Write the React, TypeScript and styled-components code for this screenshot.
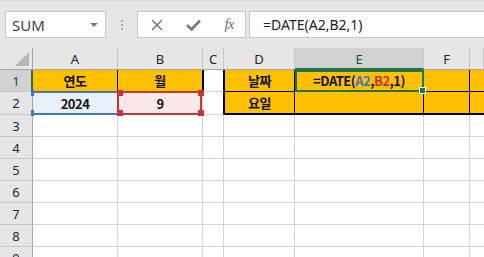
import React from "react";
import styled, { createGlobalStyle } from "styled-components";

const GlobalStyle = createGlobalStyle`
  html, body {
    margin: 0;
    padding: 0;
    background: #ffffff;
  }
  body {
    font-family: "Noto Sans", "Noto Sans CJK KR", sans-serif;
  }
`;

const YELLOW = "#ffc000";
const GRID = "1px solid #d4d4d4";
const BLACK = "1px solid #000000";
const THICK = "2px solid #000000";
const GREEN = "#217346";
const BLUE = "#4472c4";
const RED = "#c3343c";

const Window = styled.div`
  width: 484px;
  height: 257px;
  overflow: hidden;
  background: #ffffff;
`;

const FormulaBar = styled.div`
  display: flex;
  align-items: flex-start;
  height: 48px;
  box-sizing: border-box;
  padding: 10px 0 0 5px;
  background: #e6e6e6;
  border-top: 1px solid #d8d8d8;
`;

const NameBox = styled.div`
  width: 101px;
  height: 27px;
  box-sizing: border-box;
  display: flex;
  align-items: center;
  justify-content: space-between;
  padding: 0 6px 0 6px;
  background: #ffffff;
  border: 1px solid #c6c6c6;
  font-size: 15px;
  color: #444444;
`;

const DropArrow = styled.span`
  width: 0;
  height: 0;
  border-left: 4px solid transparent;
  border-right: 4px solid transparent;
  border-top: 4px solid #7a7a7a;
  margin-right: 1px;
`;

const Splitter = styled.div`
  width: 31px;
  height: 27px;
  display: flex;
  flex-direction: column;
  align-items: center;
  justify-content: center;
  gap: 2px;
  span {
    width: 2px;
    height: 2px;
    background: #a8a8a8;
  }
`;

const FxBox = styled.div`
  width: 109px;
  height: 27px;
  box-sizing: border-box;
  display: grid;
  grid-template-columns: repeat(3, 36px);
  padding-left: 1px;
  background: #ffffff;
  border: 1px solid #c6c6c6;
  color: #7a7a7a;
`;

const FxButton = styled.div`
  display: flex;
  align-items: center;
  justify-content: center;
`;

const FxGlyph = styled.span`
  font-family: "Liberation Serif", "DejaVu Serif", serif;
  font-style: italic;
  font-size: 15px;
  color: #6e6e6e;
  letter-spacing: -1px;
`;

const FormulaInput = styled.div`
  flex: 1;
  margin-left: 3px;
  height: 27px;
  box-sizing: border-box;
  padding-left: 13px;
  background: #ffffff;
  border: 1px solid #c6c6c6;
  border-right: none;
  font-size: 14px;
  line-height: 25px;
  color: #222222;
`;

const Sheet = styled.div`
  display: grid;
  grid-template-columns: 33px 85px 85px 21px 71px 129px 46px 1fr;
  grid-template-rows: 22px 22px 23px repeat(7, 22px);
`;

const Corner = styled.div`
  position: relative;
  background: #e6e6e6;
  border-right: 1px solid #a6a6a6;
  border-bottom: 1px solid #a6a6a6;
  &::after {
    content: "";
    position: absolute;
    right: 3px;
    bottom: 3px;
    width: 0;
    height: 0;
    border-left: 14px solid transparent;
    border-bottom: 14px solid #b6b6b6;
  }
`;

const ColHeader = styled.div<{ $active?: boolean }>`
  display: flex;
  align-items: center;
  justify-content: center;
  box-sizing: border-box;
  background: ${(p) => (p.$active ? "#d2d2d2" : "#e6e6e6")};
  border-right: 1px solid #c6c6c6;
  border-bottom: ${(p) => (p.$active ? `2px solid ${GREEN}` : "1px solid #a6a6a6")};
  font-size: 13px;
  color: ${(p) => (p.$active ? "#1d4d2d" : "#262626")};
  padding-top: ${(p) => (p.$active ? "1px" : "0")};
`;

const RowHeader = styled.div<{ $active?: boolean }>`
  display: flex;
  align-items: center;
  justify-content: center;
  box-sizing: border-box;
  background: ${(p) => (p.$active ? "#d2d2d2" : "#e6e6e6")};
  border-right: ${(p) => (p.$active ? `2px solid ${GREEN}` : "1px solid #a6a6a6")};
  border-bottom: 1px solid #c6c6c6;
  font-size: 13px;
  color: ${(p) => (p.$active ? "#1d4d2d" : "#262626")};
  padding-left: ${(p) => (p.$active ? "1px" : "0")};
`;

const Cell = styled.div<{
  $bg?: string;
  $right?: string;
  $bottom?: string;
  $left?: string;
}>`
  position: relative;
  display: flex;
  align-items: center;
  justify-content: center;
  box-sizing: border-box;
  background: ${(p) => p.$bg || "#ffffff"};
  border-right: ${(p) => p.$right || GRID};
  border-bottom: ${(p) => p.$bottom || GRID};
  border-left: ${(p) => p.$left || "none"};
  font-family: "Noto Sans CJK KR", "Noto Sans", sans-serif;
  font-weight: 700;
  font-size: 13px;
  letter-spacing: -0.5px;
  color: #111111;
`;

const ActiveBorder = styled.div`
  position: absolute;
  top: 0;
  left: 0;
  right: -1px;
  bottom: -1px;
  border: 2px solid ${GREEN};
  z-index: 3;
  pointer-events: none;
`;

const FillHandle = styled.div`
  position: absolute;
  right: -4px;
  bottom: -4px;
  width: 5px;
  height: 5px;
  background: ${GREEN};
  border: 1px solid #ffffff;
`;

const RefBox = styled.div<{ $color: string; $sides: "all" | "tb" }>`
  position: absolute;
  top: -1px;
  bottom: -1px;
  left: ${(p) => (p.$sides === "all" ? "-1px" : "0")};
  right: 0;
  border-top: 2px solid ${(p) => p.$color};
  border-bottom: 2px solid ${(p) => p.$color};
  border-left: ${(p) => (p.$sides === "all" ? `2px solid ${p.$color}` : "none")};
  border-right: ${(p) => (p.$sides === "all" ? `2px solid ${p.$color}` : "none")};
  z-index: ${(p) => (p.$sides === "all" ? 4 : 3)};
  pointer-events: none;
`;

const Handle = styled.span<{
  $color: string;
  $x: "left" | "right";
  $y: "top" | "bottom";
  $w?: number;
}>`
  position: absolute;
  width: ${(p) => p.$w ?? 6}px;
  height: 6px;
  background: ${(p) => p.$color};
  ${(p) => (p.$x === "left" ? "left: -2px;" : "right: -4px;")}
  ${(p) => (p.$y === "top" ? "top: -3px;" : "bottom: -3px;")}
`;

const Ref = styled.span<{ $color: string }>`
  color: ${(p) => p.$color};
`;

const CrossIcon = () => (
  <svg width="12" height="12" viewBox="0 0 12 12">
    <path d="M1 1 L11 11 M11 1 L1 11" stroke="#7a7a7a" strokeWidth="1.6" fill="none" />
  </svg>
);

const CheckIcon = () => (
  <svg width="15" height="12" viewBox="0 0 15 12">
    <path d="M1 6 L5.5 10.5 L14 1.5" stroke="#7a7a7a" strokeWidth="2.6" fill="none" />
  </svg>
);

const columns = ["A", "B", "C", "D", "E", "F", ""];

export default function App() {
  return (
    <Window>
      <GlobalStyle />
      <FormulaBar>
        <NameBox>
          SUM
          <DropArrow />
        </NameBox>
        <Splitter>
          <span />
          <span />
          <span />
        </Splitter>
        <FxBox>
          <FxButton>
            <CrossIcon />
          </FxButton>
          <FxButton>
            <CheckIcon />
          </FxButton>
          <FxButton>
            <FxGlyph>fx</FxGlyph>
          </FxButton>
        </FxBox>
        <FormulaInput>=DATE(A2,B2,1)</FormulaInput>
      </FormulaBar>

      <Sheet>
        <Corner />
        {columns.map((c, i) => (
          <ColHeader key={i} $active={c === "E"}>
            {c}
          </ColHeader>
        ))}

        <RowHeader $active>1</RowHeader>
        <Cell $bg={YELLOW} $right={BLACK}>연도</Cell>
        <Cell $bg={YELLOW} $right={BLACK}>월</Cell>
        <Cell $left={BLACK} $right={BLACK} />
        <Cell $bg={YELLOW} $left={BLACK} $right={BLACK} $bottom={BLACK}>날짜</Cell>
        <Cell $bg={YELLOW} $right={BLACK} $bottom={BLACK}>
          =DATE(<Ref $color={BLUE}>A2</Ref>,<Ref $color={RED}>B2</Ref>,1)
          <ActiveBorder>
            <FillHandle />
          </ActiveBorder>
        </Cell>
        <Cell $bg={YELLOW} $right={BLACK} $bottom={BLACK} />
        <Cell $bg={YELLOW} $right="none" $bottom={BLACK} />

        <RowHeader>2</RowHeader>
        <Cell $bg="#e9f0fa">
          2024
          <RefBox $color={BLUE} $sides="tb">
            <Handle $color={BLUE} $x="left" $y="top" $w={3} />
            <Handle $color={BLUE} $x="left" $y="bottom" $w={3} />
          </RefBox>
        </Cell>
        <Cell $bg="#fbe9ea">
          9
          <RefBox $color={RED} $sides="all">
            <Handle $color={RED} $x="left" $y="top" />
            <Handle $color={RED} $x="right" $y="top" />
            <Handle $color={RED} $x="left" $y="bottom" />
            <Handle $color={RED} $x="right" $y="bottom" />
          </RefBox>
        </Cell>
        <Cell $right={BLACK} />
        <Cell $bg={YELLOW} $left={BLACK} $right={BLACK} $bottom={THICK}>요일</Cell>
        <Cell $bg={YELLOW} $right={BLACK} $bottom={THICK} />
        <Cell $bg={YELLOW} $right={BLACK} $bottom={THICK} />
        <Cell $bg={YELLOW} $right="none" $bottom={THICK} />

        {[3, 4, 5, 6, 7, 8, 9].map((r) => (
          <React.Fragment key={r}>
            <RowHeader>{r}</RowHeader>
            {columns.map((c, i) => (
              <Cell key={i} $right={c === "" ? "none" : GRID} />
            ))}
          </React.Fragment>
        ))}
      </Sheet>
    </Window>
  );
}
